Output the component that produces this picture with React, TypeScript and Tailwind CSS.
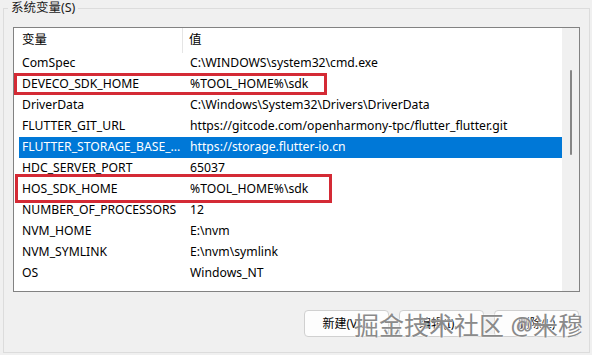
import React from "react";

const rows: [string, string][] = [
  ["ComSpec", "C:\\WINDOWS\\system32\\cmd.exe"],
  ["DEVECO_SDK_HOME", "%TOOL_HOME%\\sdk"],
  ["DriverData", "C:\\Windows\\System32\\Drivers\\DriverData"],
  ["FLUTTER_GIT_URL", "https://gitcode.com/openharmony-tpc/flutter_flutter.git"],
  ["FLUTTER_STORAGE_BASE_...", "https://storage.flutter-io.cn"],
  ["HDC_SERVER_PORT", "65037"],
  ["HOS_SDK_HOME", "%TOOL_HOME%\\sdk"],
  ["NUMBER_OF_PROCESSORS", "12"],
  ["NVM_HOME", "E:\\nvm"],
  ["NVM_SYMLINK", "E:\\nvm\\symlink"],
  ["OS", "Windows_NT"],
  ["Path", "C:\\Program Files\\Common Files\\Oracle\\Java\\javapath;..."],
];

const font = { fontFamily: '"Noto Sans", "Noto Sans CJK SC", sans-serif' };

export default function App() {
  return (
    <div
      className="relative w-[592px] h-[355px] bg-[#f0f0f0] overflow-hidden pt-[8px] pl-[3px] text-[#000]"
      style={font}
    >
      <div className="relative w-[587px] h-[345px] border border-[#dcdcdc] flex flex-col pl-[9px]">
        <div className="absolute left-[4px] -top-[9px] px-[3px] bg-[#f0f0f0] text-[12.5px] leading-[16px] text-[#1a1a1a]">
          系统变量(S)
        </div>
        <div className="mt-[18px] w-[567px] h-[265px] border border-[#828282] bg-white flex overflow-hidden">
          <div className="flex-1 flex flex-col pl-[5px] overflow-hidden">
            <div className="h-[25px] shrink-0 flex items-center text-[12.5px]">
              <div className="w-[164px] pl-[3px] h-full flex items-center border-r border-[#e5e5e5]">变量</div>
              <div className="pl-[6px]">值</div>
            </div>
            {rows.map(([k, v], i) => (
              <div
                key={k}
                className={
                  "h-[21px] shrink-0 flex items-center text-[12.2px] whitespace-nowrap " +
                  (i === 4 ? "bg-[#0078d7] text-white" : "") +
                  (i === 11 ? " pt-[6px]" : "")
                }
              >
                <div className="w-[164px] pl-[3px] overflow-hidden">{k}</div>
                <div className="pl-[7px]">{v}</div>
              </div>
            ))}
          </div>
          <div className="w-[17px] shrink-0 bg-[#f0f0f0] flex justify-center pt-[42px]">
            <div className="w-[2px] h-[85px] bg-[#858585] rounded-full" />
          </div>
        </div>
        <div className="mt-[18px] flex gap-[10px] pl-[291px]">
          {["新建(V)...", "编辑(I)...", "删除(L)"].map((t) => (
            <div
              key={t}
              className="w-[85px] h-[27px] rounded-[4px] border border-[#d0d0d0] bg-[#fdfdfd] flex items-center justify-center text-[12px]"
            >
              {t}
            </div>
          ))}
        </div>
      </div>

      <div className="absolute left-[14px] top-[73px] w-[313px] h-[22px] border-[3px] border-[#d42a35]" />
      <div className="absolute left-[15px] top-[174px] w-[317px] h-[29px] border-[3px] border-[#d42a35]" />

      <div
        className="absolute left-[354px] top-[310px] text-[25px] leading-[30px] text-[#8a8a8a] whitespace-nowrap"
        style={{ textShadow: "0 0 2px #fff, 0 0 2px #fff" }}
      >
        掘金技术社区 @米穆
      </div>
    </div>
  );
}
